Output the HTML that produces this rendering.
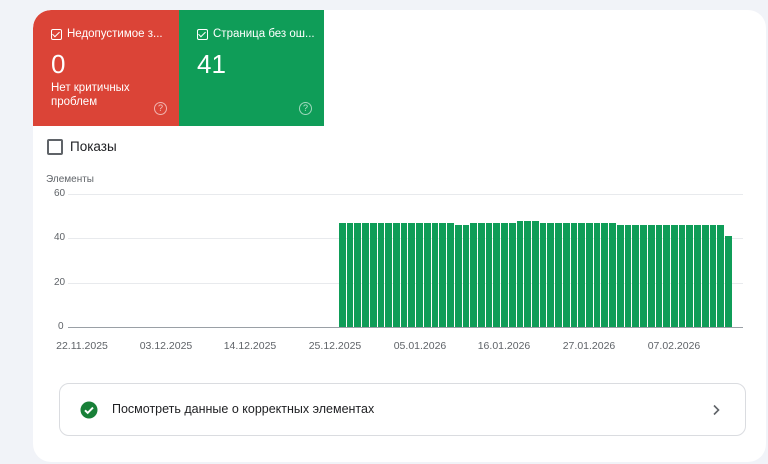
<!DOCTYPE html>
<html><head><meta charset="utf-8"><style>
*{margin:0;padding:0;box-sizing:border-box}
body{width:768px;height:464px;background:#f1f3f8;font-family:"Liberation Sans",Roboto,sans-serif;position:relative;overflow:hidden}
.card{position:absolute;left:33px;top:10px;width:733px;height:452px;background:#fff;border-radius:18px;overflow:hidden}
.t{position:absolute;top:0;height:116px;color:#fff}
.red{left:0;width:146px;background:#db4437;border-top-left-radius:18px}
.grn{left:146px;width:145px;background:#0f9d58}
.hd{position:absolute;left:18px;top:18px;font-size:11.5px;display:flex;align-items:center;white-space:nowrap}
.cb{width:11px;height:11px;border:1.3px solid #fff;border-radius:2px;margin-right:5px;position:relative}
.cb:after{content:"";position:absolute;left:2px;top:0px;width:3px;height:6px;border:solid #fff;border-width:0 1.3px 1.3px 0;transform:rotate(45deg)}
.num{position:absolute;left:18px;top:39px;font-size:26px}
.sub{position:absolute;left:18px;top:71px;font-size:11.5px;line-height:14px}
.q{position:absolute;right:12px;top:92px;width:13px;height:13px;border:1.3px solid rgba(255,255,255,.6);border-radius:50%;font-size:9px;text-align:center;line-height:10px;color:rgba(255,255,255,.7)}
.chk{position:absolute;left:14px;top:129px;width:16px;height:16px;border:2px solid #5f6368;border-radius:2px}
.pk{position:absolute;left:37px;top:129px;font-size:13.5px;color:#202124}
.yl{position:absolute;font-size:10px;color:#5f6368}
.gl{position:absolute;left:35px;width:675px;height:1px;background:#e8eaed}
.xl{position:absolute;top:330px;font-size:10.5px;color:#5f6368;transform:translateX(-50%)}
.bar{position:absolute;background:#0f9d58}
.box{position:absolute;left:26px;top:373px;width:687px;height:53px;border:1px solid #dadce0;border-radius:10px}
</style></head><body>
<div class="card">
<div class="t red"><div class="hd"><div class="cb"></div>Недопустимое з...</div><div class="num">0</div><div class="sub">Нет критичных<br>проблем</div><div class="q">?</div></div>
<div class="t grn"><div class="hd"><div class="cb"></div>Страница без ош...</div><div class="num">41</div><div class="q">?</div></div>
<div class="chk"></div><div class="pk">Показы</div>
<div class="yl" style="left:13px;top:164px">Элементы</div>
<div class="yl" style="left:21px;top:178px">60</div>
<div class="yl" style="left:21px;top:222px">40</div>
<div class="yl" style="left:21px;top:267px">20</div>
<div class="yl" style="left:25px;top:311px">0</div>
<div class="gl" style="top:184px"></div>
<div class="gl" style="top:228px"></div>
<div class="gl" style="top:273px"></div>
<div class="gl" style="top:317px;background:#9aa0a6"></div>
<div id="bars"></div>
<div class="xl" style="left:49px">22.11.2025</div>
<div class="xl" style="left:133px">03.12.2025</div>
<div class="xl" style="left:217px">14.12.2025</div>
<div class="xl" style="left:302px">25.12.2025</div>
<div class="xl" style="left:387px">05.01.2026</div>
<div class="xl" style="left:471px">16.01.2026</div>
<div class="xl" style="left:556px">27.01.2026</div>
<div class="xl" style="left:641px">07.02.2026</div>
<div class="box">
<svg style="position:absolute;left:20px;top:17px" width="18" height="18" viewBox="0 0 18 18"><circle cx="9" cy="9" r="8.5" fill="#188038"/><path d="M5 9.3l2.7 2.6L13 6.6" stroke="#fff" stroke-width="2" fill="none"/></svg>
<div style="position:absolute;left:52px;top:18px;font-size:12.5px;color:#202124">Посмотреть данные о корректных элементах</div>
<svg style="position:absolute;right:24px;top:20px" width="10" height="12" viewBox="0 0 10 12"><path d="M3 1.5l4.5 4.5L3 10.5" stroke="#5f6368" stroke-width="1.6" fill="none"/></svg>
</div>
</div>
<script>
var tops=[];for(var i=0;i<51;i++){var t=213;if(i==15||i==16)t=215;if(i>=23&&i<=25)t=211;if(i>=36&&i<=49)t=215;if(i==50)t=226;tops.push(t);}
var h="";for(var i=0;i<51;i++){var x=Math.round(306+i*7.72),x2=Math.round(306+(i+1)*7.72)-1;h+='<div class="bar" style="left:'+x+'px;width:'+(x2-x)+'px;top:'+tops[i]+'px;height:'+(317-tops[i])+'px"></div>';}
document.getElementById("bars").innerHTML=h;
</script>
</body></html>
